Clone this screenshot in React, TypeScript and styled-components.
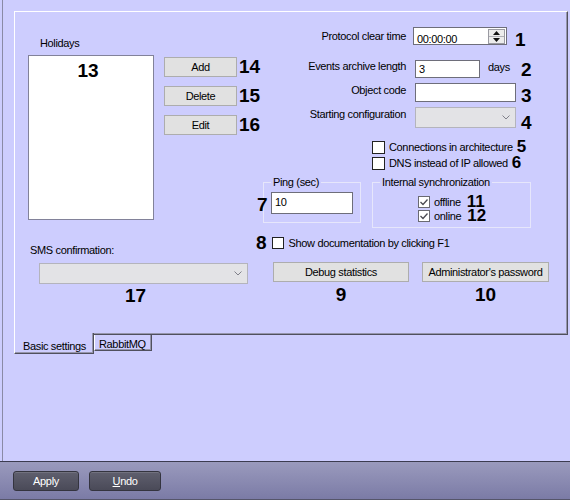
import React from "react";
import styled, { createGlobalStyle } from "styled-components";

const GlobalStyle = createGlobalStyle`
  html, body {
    margin: 0;
    padding: 0;
  }
  body {
    background: #cdcdfe;
    font-family: "Liberation Sans", Arial, sans-serif;
    font-size: 11px;
    letter-spacing: -0.35px;
    color: #000;
  }
`;

const Window = styled.div`
  width: 570px;
  height: 500px;
  display: flex;
  flex-direction: column;
  background: #cdcdfe;
  overflow: hidden;
`;

const Workspace = styled.div`
  flex: 1;
  margin-left: 2px;
  border-left: 1px solid #8a8aa6;
  padding: 11px 2px 0 11px;
`;

const Panel = styled.div`
  height: 324px;
  box-sizing: border-box;
  display: flex;
  border-top: 1px solid #fff;
  border-left: 1px solid #fff;
  border-right: 1px solid #50505e;
  border-bottom: 1px solid #50505e;
  box-shadow: inset -1px -1px 0 #9696ac;
`;

const LeftCol = styled.div`
  width: 235px;
  box-sizing: border-box;
  padding: 25px 0 0 13px;
  display: flex;
  flex-direction: column;
  align-items: flex-start;
`;

const RightCol = styled.div`
  flex: 1;
  padding-top: 15px;
  display: flex;
  flex-direction: column;
  align-items: flex-start;
`;

const Caption = styled.div<{ $indent?: number; $top?: number }>`
  height: 13px;
  line-height: 13px;
  white-space: nowrap;
  margin-left: ${(p) => p.$indent ?? 0}px;
  margin-top: ${(p) => p.$top ?? 0}px;
`;

const Mark = styled.div<{ $left?: number; $top?: number; $lh?: number; $size?: number }>`
  font-size: ${(p) => p.$size ?? 19}px;
  font-weight: bold;
  line-height: ${(p) => p.$lh ?? 19}px;
  letter-spacing: 0;
  white-space: nowrap;
  margin-left: ${(p) => p.$left ?? 0}px;
  margin-top: ${(p) => p.$top ?? 0}px;
`;

const ListRow = styled.div`
  display: flex;
  align-items: flex-start;
  margin-top: 5px;
`;

const ListBox = styled.div`
  width: 126px;
  height: 165px;
  box-sizing: border-box;
  border: 1px solid #82829a;
  background: #fff;
  padding: 5px 6px 0 0;
  display: flex;
  justify-content: center;
`;

const ButtonStack = styled.div`
  margin-left: 10px;
  padding-top: 2px;
  display: flex;
  flex-direction: column;
  gap: 9px;
`;

const ButtonLine = styled.div`
  display: flex;
  align-items: center;
  height: 20px;
`;

const Button = styled.button<{ $w: number }>`
  width: ${(p) => p.$w}px;
  height: 20px;
  box-sizing: border-box;
  padding: 0;
  border: 1px solid #adadad;
  background: #e1e1e1;
  font: inherit;
  letter-spacing: inherit;
  color: #000;
`;

const Combo = styled.div<{ $w: number; $left?: number; $top?: number }>`
  width: ${(p) => p.$w}px;
  height: 21px;
  box-sizing: border-box;
  margin-left: ${(p) => p.$left ?? 0}px;
  margin-top: ${(p) => p.$top ?? 0}px;
  border: 1px solid #b4b4bc;
  background: #e3e3e6;
  display: flex;
  align-items: center;
  justify-content: flex-end;
  padding-right: 5px;
`;

const FormRow = styled.div<{ $top?: number; $h: number }>`
  display: flex;
  align-items: flex-start;
  height: ${(p) => p.$h}px;
  margin-top: ${(p) => p.$top ?? 0}px;
`;

const FieldLabel = styled.div<{ $offset?: number }>`
  width: 156px;
  text-align: right;
  line-height: 13px;
  white-space: nowrap;
  padding-top: ${(p) => p.$offset ?? 0}px;
`;

const TextBox = styled.div<{ $w: number; $h: number; $left?: number; $pad?: number; $top?: number }>`
  width: ${(p) => p.$w}px;
  height: ${(p) => p.$h}px;
  box-sizing: border-box;
  margin-left: ${(p) => p.$left ?? 0}px;
  margin-top: ${(p) => p.$top ?? 0}px;
  border: 1px solid #6e6e7a;
  background: #fff;
  line-height: 13px;
  padding: ${(p) => p.$pad ?? 2}px 0 0 3px;
  display: flex;
  align-items: flex-start;
`;

const Unit = styled.div`
  width: 33px;
  margin-left: 8px;
  padding-top: 1px;
  line-height: 13px;
`;

const Spin = styled.div`
  margin-left: auto;
  margin-right: 1px;
  margin-top: -4px;
  width: 17px;
  height: 15px;
  box-sizing: border-box;
  border: 1px solid #9a9aa2;
  background: #ececec;
  display: flex;
  flex-direction: column;
`;

const SpinHalf = styled.div<{ $bottom?: boolean }>`
  flex: 1;
  display: flex;
  align-items: center;
  justify-content: center;
  border-top: ${(p) => (p.$bottom ? "1px solid #b0b0b6" : "none")};
`;

const CheckRow = styled.div<{ $left?: number; $top?: number; $h?: number }>`
  display: flex;
  align-items: center;
  height: ${(p) => p.$h ?? 16}px;
  margin-left: ${(p) => p.$left ?? 0}px;
  margin-top: ${(p) => p.$top ?? 0}px;
  white-space: nowrap;
`;

const Box = styled.div<{ $size: number; $checked?: boolean }>`
  width: ${(p) => p.$size}px;
  height: ${(p) => p.$size}px;
  box-sizing: border-box;
  flex-shrink: 0;
  border: 1px solid ${(p) => (p.$checked ? "#6a6a72" : "#222")};
  background: #fff;
  display: flex;
  align-items: center;
  justify-content: center;
`;

const CheckText = styled.span<{ $left?: number }>`
  margin-left: ${(p) => p.$left ?? 4}px;
  line-height: 13px;
`;

const GroupsRow = styled.div`
  display: flex;
  align-items: flex-start;
  margin-top: 5px;
`;

const Group = styled.fieldset<{ $w: number; $left: number; $pb: number }>`
  position: relative;
  width: ${(p) => p.$w}px;
  box-sizing: border-box;
  margin: 0 0 0 ${(p) => p.$left}px;
  padding: 0 0 ${(p) => p.$pb}px 7px;
  border: 1px solid #e6e6fb;
  min-width: 0;
`;

const Legend = styled.legend`
  padding: 0 2px;
  line-height: 13px;
  white-space: nowrap;
`;

const GroupMark = styled(Mark)`
  position: absolute;
  left: -7px;
  top: 6px;
`;

const ActionRow = styled.div`
  display: flex;
  align-items: flex-start;
  margin-top: 12px;
`;

const ActionCell = styled.div<{ $left: number }>`
  display: flex;
  flex-direction: column;
  align-items: center;
  margin-left: ${(p) => p.$left}px;
`;

const TabStrip = styled.div`
  display: flex;
  align-items: flex-start;
`;

const Tab = styled.div<{ $active?: boolean; $w: number }>`
  position: relative;
  z-index: 1;
  width: ${(p) => p.$w}px;
  box-sizing: border-box;
  height: ${(p) => (p.$active ? 21 : 16)}px;
  margin-top: ${(p) => (p.$active ? -2 : 0)}px;
  padding: ${(p) => (p.$active ? "7px 0 0 8px" : "3px 0 0 4px")};
  line-height: 13px;
  white-space: nowrap;
  background: #cdcdfe;
  border-left: 1px solid #fff;
  border-right: 1px solid #50505e;
  border-bottom: 1px solid #50505e;
  box-shadow: inset -1px -1px 0 #9696ac;
`;

const Footer = styled.div`
  height: 39px;
  box-sizing: border-box;
  border-top: 1px solid #3c3c50;
  border-bottom: 1px solid #55556a;
  background: linear-gradient(#9a9abd, #7b7ba6);
  display: flex;
  gap: 10px;
  padding: 9px 0 0 13px;
`;

const FooterButton = styled.button<{ $w: number }>`
  width: ${(p) => p.$w}px;
  height: 20px;
  box-sizing: border-box;
  padding: 0;
  border: 1px solid #34343f;
  border-radius: 3px;
  background: linear-gradient(#5f5f6e, #4a4a58);
  box-shadow: inset 0 1px 0 #72727f;
  color: #fff;
  font: inherit;
  letter-spacing: inherit;
`;

const Spacer = styled.span<{ $w: number }>`
  display: inline-block;
  width: ${(p) => p.$w}px;
`;

const Chevron = () => (
  <svg width="8" height="5" viewBox="0 0 8 5">
    <polyline points="0.5,0.5 4,4 7.5,0.5" fill="none" stroke="#80808a" strokeWidth="1" />
  </svg>
);

const Arrow = ({ down }: { down?: boolean }) => (
  <svg width="7" height="4" viewBox="0 0 7 4">
    <polygon points={down ? "0,0 7,0 3.5,4" : "0,4 7,4 3.5,0"} fill="#111" />
  </svg>
);

const Checkbox = ({ size, checked }: { size: number; checked?: boolean }) => (
  <Box $size={size} $checked={checked}>
    {checked && (
      <svg width="10" height="10" viewBox="0 0 10 10">
        <polyline points="1.5,5 4,7.5 8.5,2.5" fill="none" stroke="#4a4a52" strokeWidth="1.3" />
      </svg>
    )}
  </Box>
);

export default function App() {
  return (
    <Window>
      <GlobalStyle />
      <Workspace>
        <Panel>
          <LeftCol>
            <Caption $indent={12}>Holidays</Caption>
            <ListRow>
              <ListBox>
                <Mark>13</Mark>
              </ListBox>
              <ButtonStack>
                <ButtonLine>
                  <Button $w={73}>Add</Button>
                  <Mark $left={2} $lh={20}>14</Mark>
                </ButtonLine>
                <ButtonLine>
                  <Button $w={73}>Delete</Button>
                  <Mark $left={2} $lh={20}>15</Mark>
                </ButtonLine>
                <ButtonLine>
                  <Button $w={73}>Edit</Button>
                  <Mark $left={2} $lh={20}>16</Mark>
                </ButtonLine>
              </ButtonStack>
            </ListRow>
            <Caption $indent={2} $top={24}>SMS confirmation:</Caption>
            <Combo $w={209} $left={11} $top={6}>
              <Chevron />
            </Combo>
            <Mark $left={97} $top={2}>17</Mark>
          </LeftCol>

          <RightCol>
            <FormRow $h={18}>
              <FieldLabel $offset={3}>Protocol clear time</FieldLabel>
              <TextBox $w={94} $h={18} $left={7} $pad={5}>
                00:00:00
                <Spin>
                  <SpinHalf>
                    <Arrow />
                  </SpinHalf>
                  <SpinHalf $bottom>
                    <Arrow down />
                  </SpinHalf>
                </Spin>
              </TextBox>
              <Mark $left={8} $top={3}>1</Mark>
            </FormRow>
            <FormRow $top={15} $h={18}>
              <FieldLabel>Events archive length</FieldLabel>
              <TextBox $w={65} $h={18} $left={9} $pad={2}>3</TextBox>
              <Unit>days</Unit>
              <Mark>2</Mark>
            </FormRow>
            <FormRow $top={5} $h={19}>
              <FieldLabel $offset={1}>Object code</FieldLabel>
              <TextBox $w={101} $h={19} $left={9} />
              <Mark $left={5} $top={3}>3</Mark>
            </FormRow>
            <FormRow $top={5} $h={21}>
              <FieldLabel $offset={1}>Starting configuration</FieldLabel>
              <Combo $w={101} $left={9}>
                <Chevron />
              </Combo>
              <Mark $left={5} $top={6}>4</Mark>
            </FormRow>

            <CheckRow $left={122} $top={11}>
              <Checkbox size={13} />
              <CheckText>Connections in architecture</CheckText>
              <Mark $left={4} $lh={16} $size={17}>5</Mark>
            </CheckRow>
            <CheckRow $left={122}>
              <Checkbox size={13} />
              <CheckText>DNS instead of IP allowed</CheckText>
              <Mark $left={4} $lh={16} $size={17}>6</Mark>
            </CheckRow>

            <GroupsRow>
              <Group $w={98} $left={13} $pb={8}>
                <Legend>Ping (sec)</Legend>
                <GroupMark>7</GroupMark>
                <TextBox $w={82} $h={22} $pad={3} $top={3}>10</TextBox>
              </Group>
              <Group $w={159} $left={11} $pb={4}>
                <Legend>Internal synchronization</Legend>
                <CheckRow $left={38} $top={6} $h={14}>
                  <Checkbox size={12} checked />
                  <CheckText>offline</CheckText>
                  <Mark $left={6} $lh={14} $size={17}>11</Mark>
                </CheckRow>
                <CheckRow $left={38} $h={14}>
                  <Checkbox size={12} checked />
                  <CheckText>online</CheckText>
                  <Mark $left={6} $lh={14} $size={17}>12</Mark>
                </CheckRow>
              </Group>
            </GroupsRow>

            <CheckRow $left={6} $top={8} $h={14}>
              <Mark $lh={14}>8</Mark>
              <Spacer $w={5} />
              <Checkbox size={12} />
              <CheckText $left={5}>Show documentation by clicking F1</CheckText>
            </CheckRow>

            <ActionRow>
              <ActionCell $left={23}>
                <Button $w={136}>Debug statistics</Button>
                <Mark $top={3}>9</Mark>
              </ActionCell>
              <ActionCell $left={13}>
                <Button $w={127}>Administrator's password</Button>
                <Mark $top={3}>10</Mark>
              </ActionCell>
            </ActionRow>
          </RightCol>
        </Panel>
        <TabStrip>
          <Tab $active $w={80}>Basic settings</Tab>
          <Tab $w={58}>RabbitMQ</Tab>
        </TabStrip>
      </Workspace>
      <Footer>
        <FooterButton $w={66}>Apply</FooterButton>
        <FooterButton $w={72}>
          <u>U</u>ndo
        </FooterButton>
      </Footer>
    </Window>
  );
}
